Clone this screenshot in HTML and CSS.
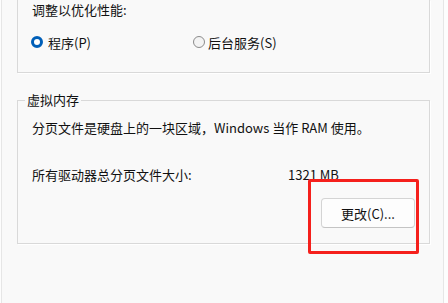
FILE: index.html
```html
<!DOCTYPE html>
<html lang="zh-CN">
<head>
  <meta charset="UTF-8">
  <title>性能选项</title>
  <link rel="stylesheet" href="styles.css">
</head>
<body>
  <div class="dialog">
    <!-- 处理器计划 (top cut off) -->
    <div class="group group-top">
      <p class="line">调整以优化性能:</p>
      <div class="radios">
        <label class="radio radio-program"><span class="dot checked"></span>程序(P)</label>
        <label class="radio radio-service"><span class="dot"></span>后台服务(S)</label>
      </div>
    </div>

    <!-- 虚拟内存 -->
    <fieldset class="group group-vm">
      <legend>虚拟内存</legend>
      <p class="line desc">分页文件是硬盘上的一块区域，Windows 当作 RAM 使用。</p>
      <div class="line size-row">
        <span class="size-label">所有驱动器总分页文件大小:</span>
        <span>1321 MB</span>
      </div>
      <div class="actions">
        <button class="btn">更改(C)...</button>
      </div>
    </fieldset>

    <div class="highlight"></div>
  </div>
</body>
</html>
```

FILE: styles.css
```css
* {
  box-sizing: border-box;
}
body {
  margin: 0;
  background-color: #fdfdfd;
  font-family: "Noto Sans CJK SC", "Noto Sans", sans-serif;
  font-size: 13px;
  color: #111111;
}
.dialog {
  position: relative;
  margin-left: 1px;
  width: 443px;
  height: 303px;
  padding-left: 15px;
  background-color: #f9f9f9;
  border-left: 1px solid #e6e6e6;
  border-right: 1px solid #e6e6e6;
}
.line {
  margin: 0;
  height: 20px;
  line-height: 20px;
}
.group {
  width: 413px;
  border: 1px solid #d9d9d9;
  box-shadow: 1px 1px 0 #ffffff;
}
.group-top {
  border-top: none;
  height: 73px;
  padding: 0 0 0 14px;
}
.radios {
  display: flex;
  margin-top: 12px;
  height: 20px;
  align-items: center;
}
.radio {
  display: flex;
  align-items: center;
}
.radio-program {
  width: 162px;
  margin-left: -1px;
}
.radio-program .dot {
  margin-right: 5px;
}
.radio-service .dot {
  margin-right: 3px;
}
.dot {
  flex: none;
  width: 12px;
  height: 12px;
  border-radius: 50%;
  border: 1px solid #8b8b8b;
  background-color: #f3f3f3;
}
.dot.checked {
  border: 3px solid #005fb8;
  background-color: #ffffff;
}
.group-vm {
  margin: 19px 0 0 0;
  height: 152px;
  padding: 0 14px 0 14px;
}
.group-vm legend {
  margin-left: -7px;
  padding: 0 2px;
  line-height: 16px;
}
.desc {
  margin-top: 10px;
}
.size-row {
  display: flex;
  margin-top: 27px;
}
.size-label {
  width: 256px;
}
.actions {
  display: flex;
  justify-content: flex-end;
  margin-top: 13px;
}
.btn {
  width: 94px;
  height: 30px;
  font-family: inherit;
  font-size: 13px;
  color: #111111;
  background-color: #fdfdfd;
  border: 1px solid #d4d4d4;
  border-bottom-color: #c4c4c4;
  border-radius: 4px;
}

/* red annotation box */
.highlight {
  position: absolute;
  left: 306px;
  top: 179px;
  width: 111px;
  height: 75px;
  border: 3px solid #f5201c;
  border-radius: 2px;
}
```
